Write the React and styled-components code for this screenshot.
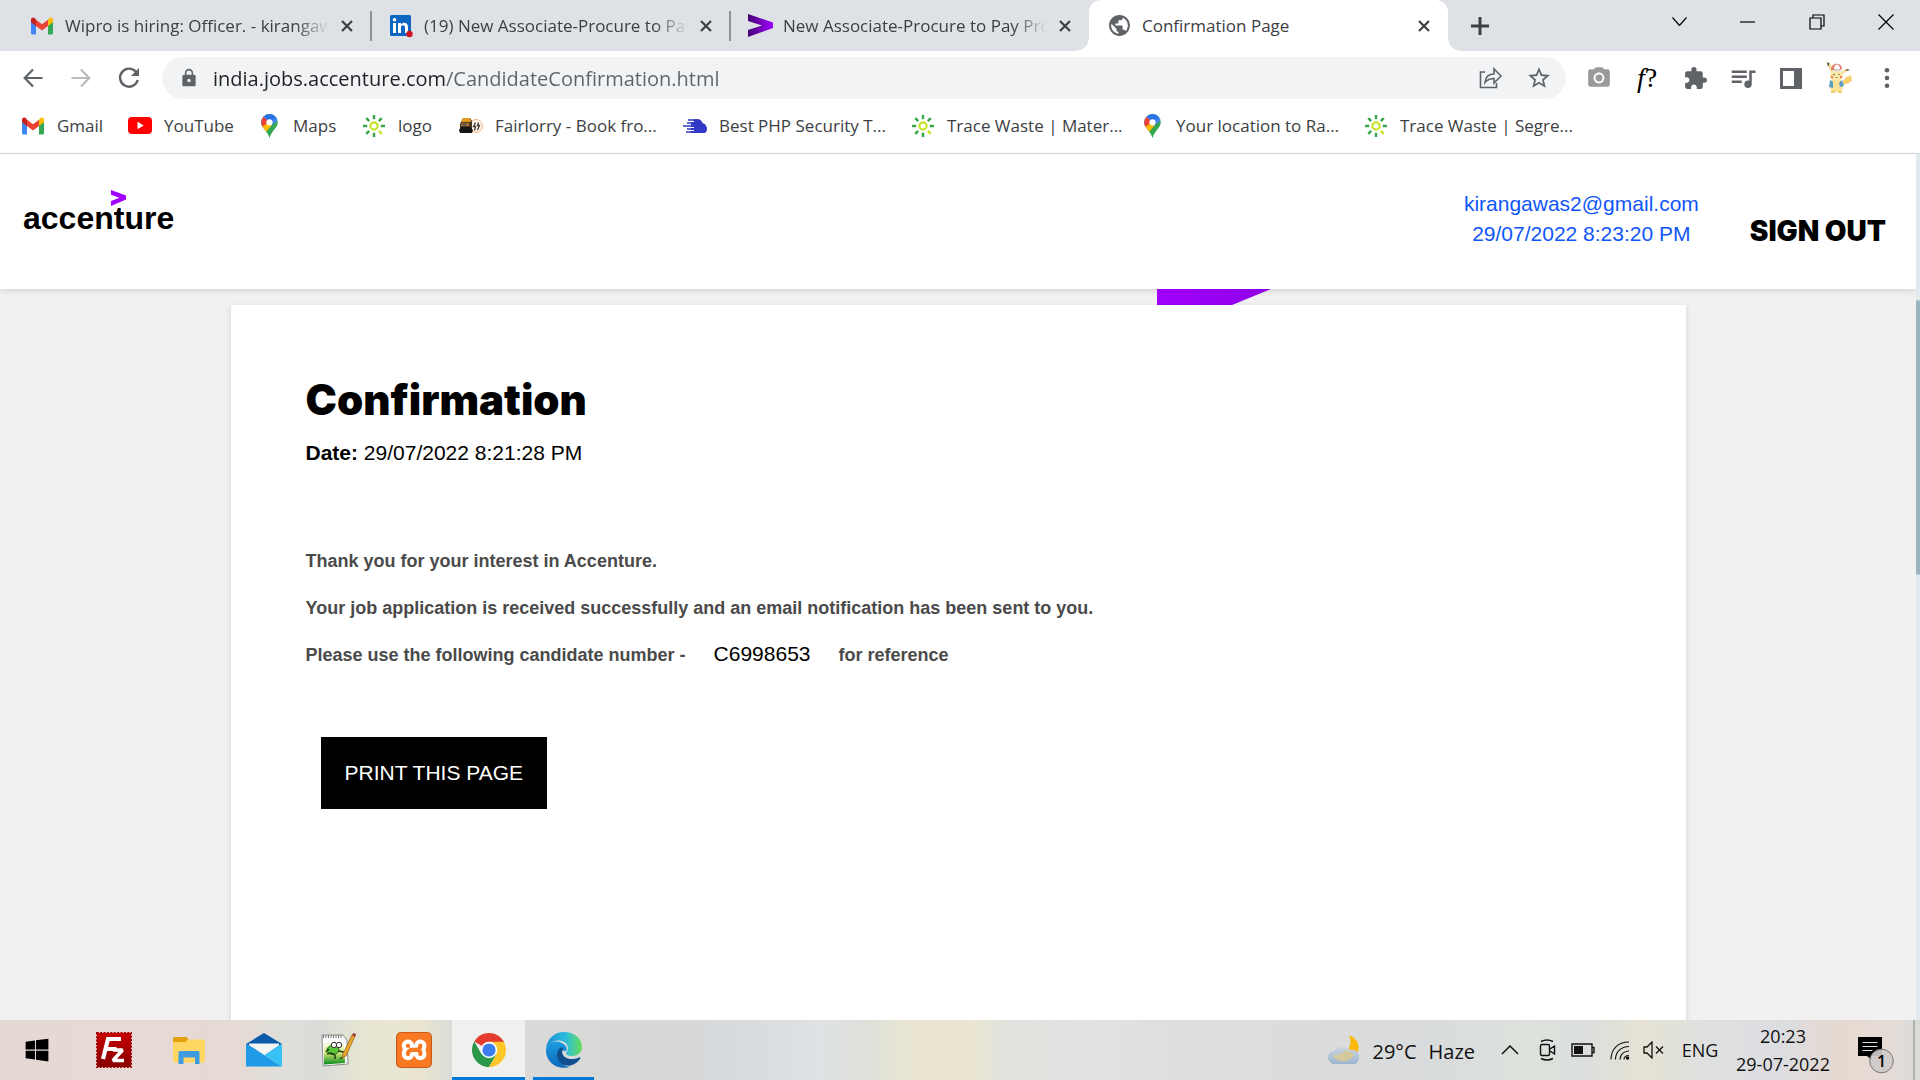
import React from "react";
import styled, { createGlobalStyle } from "styled-components";
import { MdLock, MdStarBorder, MdExtension, MdQueueMusic, MdPublic, MdCameraAlt } from "react-icons/md";
import { FaWindows } from "react-icons/fa";
import { SiXampp } from "react-icons/si";

const UI = `"Open Sans", "Noto Sans", sans-serif`;
const ARIAL = `"Liberation Sans", Arial, sans-serif`;
const GRAPHIK = `Inter, "Liberation Sans", sans-serif`;

const GlobalStyle = createGlobalStyle`
  * { box-sizing: border-box; }
  body { margin: 0; background: #fff; overflow: hidden; }
  button { border: 0; padding: 0; background: none; color: inherit; font: inherit; cursor: pointer; }
  a { color: inherit; text-decoration: none; }
  p, h1 { margin: 0; }
  svg { display: block; flex: none; }
`;

const Screen = styled.div`
  display: flex;
  flex-direction: column;
  height: 100vh;
  font-family: ${UI};
`;

/* ---------- browser chrome ---------- */

const TabStrip = styled.div`
  display: flex;
  height: 51px;
  padding-left: 12px;
  background: #dee1e6;
  color: #3c4043;
`;

const Tab = styled.div`
  position: relative;
  display: flex;
  align-items: center;
  gap: 12px;
  width: 359px;
  padding: 0 18px;
  background: ${(p) => (p.$active ? "#fff" : "transparent")};
  border-radius: ${(p) => (p.$active ? "12px 12px 0 0" : "0")};

  &::before,
  &::after {
    content: "";
    display: ${(p) => (p.$active ? "block" : "none")};
    position: absolute;
    bottom: 0;
    width: 12px;
    height: 12px;
  }
  &::before { right: 100%; background: radial-gradient(circle at 0 0, transparent 11px, #fff 12px); }
  &::after { left: 100%; background: radial-gradient(circle at 100% 0, transparent 11px, #fff 12px); }
`;

const TabDivider = styled.span`
  position: absolute;
  right: -1px;
  top: 11px;
  width: 2px;
  height: 30px;
  background: #8f9399;
`;

const TabLink = styled.button`
  display: flex;
  flex: 1;
  align-items: center;
  gap: 11px;
  min-width: 0;
  height: 51px;
  text-align: left;
`;

const TabTitle = styled.span`
  flex: 1;
  overflow: hidden;
  white-space: nowrap;
  font-size: 17px;
  line-height: 24px;
  ${(p) => p.$fade && "mask-image: linear-gradient(90deg, #000 calc(100% - 34px), transparent);"}
`;

const IconBox = styled.span`
  display: flex;
  flex: none;
  align-items: center;
  justify-content: center;
  width: 24px;
  height: 28px;
`;

const IconButton = styled.button`
  display: flex;
  flex: none;
  align-items: center;
  justify-content: center;
  width: ${(p) => p.$w || 48}px;
  height: ${(p) => p.$h || 42}px;
  color: ${(p) => p.$c || "#5f6368"};
`;

const WindowButtons = styled.div`
  display: flex;
  margin-left: auto;
`;

const Toolbar = styled.div`
  display: flex;
  align-items: center;
  height: 54px;
  padding: 0 9px;
`;

const Omnibox = styled.label`
  display: flex;
  flex: 1;
  align-items: center;
  height: 42px;
  margin: 0 9px;
  padding: 0 3px 0 15px;
  border-radius: 21px;
  background: #f1f3f4;
  color: #5f6368;
`;

const UrlInput = styled.input`
  flex: 1;
  min-width: 0;
  margin-left: 12px;
  padding: 2px 0 0;
  border: 0;
  outline: 0;
  background: linear-gradient(90deg, #202124 232px, #5f6368 232px);
  background-clip: text;
  -webkit-text-fill-color: transparent;
  font-family: ${UI};
  font-size: 20px;
  line-height: 28px;
`;

const Extension = styled.span`
  font-family: "Liberation Serif", serif;
  font-size: 28px;
  line-height: 30px;
  color: #000;
`;

const Bookmarks = styled.nav`
  display: flex;
  height: 49px;
  padding: 0 21px;
  border-bottom: 1px solid #d5d7da;
`;

const Bookmark = styled.a`
  display: flex;
  align-items: center;
  gap: 12px;
  width: ${(p) => p.$w}px;
  height: 41px;
  white-space: nowrap;
  font-size: 17px;
  color: #3c4043;
`;

/* ---------- page ---------- */

const Viewport = styled.div`
  display: flex;
  flex: 1;
  min-height: 0;
`;

const Page = styled.main`
  display: flex;
  flex: 1;
  flex-direction: column;
  min-width: 0;
  background: #f1f1f1;
  font-family: ${ARIAL};
`;

const ScrollTrack = styled.div`
  width: 4px;
  padding-top: 146px;
  background: #e1eaed;
`;

const ScrollThumb = styled.div`
  height: 275px;
  border-radius: 2px;
  background: #9bb4c2;
`;

const Header = styled.header`
  display: flex;
  justify-content: space-between;
  height: 135px;
  padding: 0 30px 0 23px;
  background: #fff;
  box-shadow: 0 2px 6px rgba(0, 0, 0, 0.12);
`;

const Logo = styled.a`
  display: flex;
  flex-direction: column;
  padding-top: 36px;
  font-size: 32px;
  font-weight: 700;
  line-height: 24px;
  color: #000;

  svg { margin-left: 88px; }
`;

const Account = styled.div`
  display: flex;
  gap: 51px;
`;

const AccountInfo = styled.div`
  padding-top: 35px;
  text-align: center;
  font-size: 21px;
  line-height: 30px;
  color: #0f56fa;
`;

const SignOut = styled.a`
  padding-top: 61px;
  font-family: ${GRAPHIK};
  font-size: 28px;
  font-weight: 900;
  line-height: 32px;
  color: #000;
`;

const Banner = styled.div`
  height: 16px;
  padding-left: calc(50% + 199px);
`;

const Card = styled.section`
  flex: 1;
  width: 76%;
  max-width: 1455px;
  margin: 0 auto;
  padding: 0 75px;
  background: #fff;
  box-shadow: 0 2px 6px rgba(0, 0, 0, 0.14);
`;

const Title = styled.h1`
  padding-top: 70px;
  font-family: ${GRAPHIK};
  font-size: 42px;
  font-weight: 900;
  line-height: 50px;
  color: #000;
`;

const DateLine = styled.p`
  margin-top: 13px;
  font-size: 21px;
  line-height: 30px;
  color: #000;
`;

const Messages = styled.div`
  margin-top: 70px;
`;

const Message = styled.p`
  height: 47px;
  font-size: 18px;
  font-weight: 700;
  line-height: 47px;
  color: #4a4a4a;
`;

const CandidateNumber = styled.span`
  margin: 0 28px;
  font-size: 21px;
  font-weight: 400;
  line-height: 24px;
  color: #000;
`;

const PrintButton = styled.button`
  display: block;
  height: 72px;
  margin: 58px 0 0 15px;
  padding: 0 24px;
  background: #000;
  font-family: ${ARIAL};
  font-size: 21px;
  color: #fff;
`;

/* ---------- taskbar ---------- */

const Taskbar = styled.footer`
  display: flex;
  height: 60px;
  color: #111;
  background: linear-gradient(
    90deg, #e5d9d5 0, #e7d9d6 180px, #e5dad4 240px, #dfdfda 280px, #dadcd8 320px, #e8e6d2 370px,
    #e9e5cf 420px, #dbdbd8 450px, #dadad8 520px, #d8d8d6 610px, #d6d8da 700px, #dee2e4 820px,
    #dfe0da 870px, #e8e5d2 905px, #ebe3cf 945px, #e9e6d2 975px, #e0e2de 1010px, #e1e3e1 1090px,
    #dddedf 1180px, #dcdcda 1310px, #d9dbdd 1420px, #dde2dc 1530px, #dcdfdd 1590px, #e5e2d3 1640px,
    #dee0e0 1710px, #dcdde1 1780px, #e6d9d1 1840px, #e6dcd6 1890px, #dbdcda 1915px);
`;

const Apps = styled.div`
  display: flex;
  gap: 2px;
`;

const AppButton = styled.button`
  position: relative;
  display: flex;
  align-items: center;
  justify-content: center;
  width: 73px;
  height: 60px;
  background: ${(p) => (p.$active ? "#f0f0ef" : "none")};

  &:first-child { width: 75px; padding-right: 2px; }

  &::after {
    content: "";
    display: ${(p) => (p.$line ? "block" : "none")};
    position: absolute;
    bottom: 0;
    width: ${(p) => p.$line}px;
    height: 3px;
    background: #0078d7;
  }
`;

const Tray = styled.div`
  display: flex;
  align-items: center;
  margin-left: auto;
`;

const Weather = styled.button`
  display: flex;
  align-items: center;
  gap: 12px;
  margin-right: 20px;
  font-size: 20px;
  line-height: 28px;

  span { padding-top: 3px; }
`;

const Language = styled.button`
  width: 58px;
  margin-left: 6px;
  font-size: 18px;
`;

const Clock = styled.button`
  width: 108px;
  text-align: center;
  font-size: 18px;
  line-height: 28px;
`;

const Notifications = styled.button`
  width: 76px;
  padding: 10px 0 0 21px;
`;

const ShowDesktop = styled.button`
  width: 7px;
  height: 60px;
  border-left: 2px solid #b0b0ac;
`;

const XamppTile = styled.span`
  display: block;
  padding: 1px;
  border-radius: 5px;
  background: linear-gradient(#fff, #fff) center / 28px 28px no-repeat, #c65b1a;
`;

/* ---------- icons ---------- */

const GmailIcon = () => (
  <svg width="22" height="18" viewBox="0 0 22 17">
    <path d="M0 3v12.500q0 1.500 1.500 1.500H5V7z" fill="#4285f4" />
    <path d="M22 3v12.500q0 1.500-1.500 1.500H17V7z" fill="#34a853" />
    <path d="M17 2.200V8.500L22 4.700V2.300C22 .2 19.800-.7 18.200.6z" fill="#fbbc04" />
    <path d="M5 8.500V2.200L11 6.700l6-4.500v6.300L11 13z" fill="#ea4335" />
    <path d="M0 2.300v2.400l5 3.800V2.200L3.800.6C2.200-.7 0 .2 0 2.300z" fill="#c5221f" />
  </svg>
);

const LinkedInIcon = () => (
  <svg width="24" height="24" viewBox="0 0 24 24">
    <rect x="1" y="1" width="21" height="21" rx="1.500" fill="#0a66c2" />
    <path d="M4 9h3v10H4zM9 9h3v1.400c1.800-2.700 7-2.200 7 2.600v6h-3v-5.400c0-3.200-4-2.800-4 0V19H9z" fill="#fff" />
    <circle cx="5.500" cy="5.800" r="1.800" fill="#fff" />
    <circle cx="20.500" cy="20" r="3.200" fill="#d11124" />
  </svg>
);

const ChevronLogo = () => (
  <svg width="25" height="25" viewBox="0 0 25 25">
    <defs>
      <linearGradient id="chev"><stop offset="0" stopColor="#460073" /><stop offset="1" stopColor="#a100ff" /></linearGradient>
    </defs>
    <path d="M0 1l25 8.500v5.500L0 24v-7l14-4.500L0 8z" fill="url(#chev)" />
  </svg>
);

const YouTubeIcon = () => (
  <svg width="24" height="17" viewBox="0 0 24 17">
    <rect width="24" height="17" rx="4" fill="#f00" />
    <path d="M9.500 4.800v7.400l6.200-3.700z" fill="#fff" />
  </svg>
);

const MapsIcon = () => (
  <svg width="17" height="24" viewBox="0 0 17 24">
    <defs>
      <clipPath id="pin"><path d="M8.500 0A8.300 8.300 0 0 0 .2 8.300C.2 14 6 16 8.500 24 11 16 16.800 14 16.800 8.300A8.300 8.300 0 0 0 8.500 0z" /></clipPath>
    </defs>
    <g clipPath="url(#pin)">
      <rect width="17" height="24" fill="#34a853" />
      <path d="M0 14L8.500 5 17 0H0z" fill="#4285f4" />
      <path d="M8.500 8L17 0v6L9 13z" fill="#4285f4" />
      <path d="M0 2.500l2.500.5 6 5-6 7H0z" fill="#ea4335" />
      <path d="M0 13.500L8.500 8l2.500 3-6.500 7.500z" fill="#fbbc04" />
      <path d="M3 2l6-2 7 3-7 5z" fill="#2b74e8" />
    </g>
    <circle cx="8.500" cy="8.300" r="3.100" fill="#fff" />
  </svg>
);

const SunIcon = () => (
  <svg width="22" height="22" viewBox="-11 -11 22 22">
    <circle r="3.600" fill="none" stroke="#c6e528" strokeWidth="2.200" />
    {[0, 45, 90, 135, 180, 225, 270, 315].map((a) => (
      <rect key={a} x="-1.200" y="-11" width="2.400" height="4.200" fill={a === 135 ? "#c6e528" : "#35a648"} transform={`rotate(${a})`} />
    ))}
  </svg>
);

const TruckIcon = () => (
  <svg width="24" height="18" viewBox="0 0 24 18">
    <circle cx="17" cy="9" r="6.500" fill="#fff4ea" stroke="#f3b78a" />
    <path d="M4 1h7l2 3v9H1V7z" fill="#4a3826" />
    <path d="M4 1h7l1 4H2z" fill="#e49a1d" />
    <path d="M3 6h7v3H2z" fill="#b97a26" />
    <path d="M4 6.500h4v2H3z" fill="#555" />
    <path d="M0 13l2-3h9l3 3-1 3H1z" fill="#151515" />
    <path d="M16.500 5.500l-2 4h2l-1 4M19.500 5.500l-1 3h2l-2 4.500" stroke="#383838" fill="none" strokeWidth="1.300" />
  </svg>
);

const CloudIcon = () => (
  <svg width="24" height="16" viewBox="0 0 24 16">
    <path d="M8 8c0-4 2-7 6-7 3 0 5 2 5.500 4C23 6 24 9 24 11c0 2-1 4-3 4H8z" fill="#3239c4" />
    <path d="M5 2h8M4 5h7M0 8h10M4 11h7M3 14h8" stroke="#3239c4" strokeWidth="1.300" />
    <path d="M7 3.500h4M5 9.500h6M6 12.500h5" stroke="#fff" strokeWidth="1" />
  </svg>
);

const Stroke = ({ w, h, d, sw = 2, c = "currentColor", children }) => (
  <svg width={w} height={h} viewBox={`0 0 ${w} ${h}`} fill="none" stroke={c} strokeWidth={sw}>
    <path d={d} />
    {children}
  </svg>
);

const PikachuIcon = () => (
  <svg width="26" height="32" viewBox="0 0 26 32">
    <path d="M17 19l3-4 5-1.500 1 5-4 3-5 1z" fill="#f6cf6d" />
    <path d="M1 0l3 1.500 4 7-3 3zM24 8l-4-1-5 3 1 2z" fill="#f5df97" />
    <path d="M1 0l2.500 1.500L2 5zM24 8l-3-1-2 2z" fill="#51412f" />
    <path d="M5 18q5-4 10 0l2 8-2 4H6l-2-4z" fill="#f9e194" />
    <path d="M4 18l3 2v6l-4-1zM16 18l-3 3 1 4 4-1z" fill="#5a9bc4" />
    <ellipse cx="10.500" cy="13.500" rx="6.500" ry="5.500" fill="#fbe9a9" />
    <path d="M5 8c0-8 11-8 11-1l-3 1z" fill="#e3786c" />
    <path d="M8 7c0-6 6-6 6 0z" fill="#fff" />
    <path d="M5 8.500q6-3 12 0l-6 1z" fill="#d2d6d8" />
    <circle cx="6" cy="15" r="1.200" fill="#f07c58" />
    <circle cx="15" cy="15" r="1.200" fill="#f07c58" />
    <circle cx="8" cy="12.500" r=".8" fill="#554" />
    <path d="M12 12.500h2M9.500 15q1 2 2 0" stroke="#865" fill="none" strokeWidth=".8" />
    <path d="M5 29h4v2H5zM12 29h4v2h-4z" fill="#ecca70" />
  </svg>
);

const FileZillaIcon = () => (
  <svg width="36" height="36" viewBox="0 0 36 36">
    <defs><linearGradient id="fz" x2="0" y2="1"><stop offset="0" stopColor="#c80000" /><stop offset="1" stopColor="#870000" /></linearGradient></defs>
    <rect x="1" y="1" width="34" height="34" fill="url(#fz)" />
    <rect x=".75" y=".75" width="34.500" height="34.500" fill="none" stroke="#a00000" strokeWidth="1.500" strokeDasharray="2 1.400" />
    <path d="M7 27L12 7h13M9.500 17h11" stroke="#fff" strokeWidth="4.200" fill="none" />
    <path d="M17 18h9.500L17 28.500h11" stroke="#fff" strokeWidth="3.600" fill="none" strokeLinejoin="bevel" />
  </svg>
);

const FolderIcon = () => (
  <svg width="32" height="27" viewBox="0 0 32 27">
    <path d="M0 1.500Q0 0 1.500 0h12L16 3v3H0z" fill="#e3a00a" />
    <path d="M0 5h12l3-2.500h15.500Q32 2.500 32 4v20q0 1.500-1.500 1.500h-29Q0 25.500 0 24z" fill="#ffd661" />
    <path d="M5.500 27V15.500Q5.500 14 7 14h18q1.500 0 1.500 1.500V27H22v-6.500H10.500V27z" fill="#3f9be0" />
  </svg>
);

const MailIcon = () => (
  <svg width="36" height="34" viewBox="0 0 36 34">
    <path d="M0 11L18 0l18 11v6H0z" fill="#0a5aa8" />
    <path d="M3 10.500h30v2L19 22 3 12.500z" fill="#f4f4f4" />
    <path d="M0 10.500L36 33.500H0z" fill="#1e9ae6" />
    <path d="M36 10.500v23L18.500 22z" fill="#36c2f5" />
  </svg>
);

const NotepadIcon = () => (
  <svg width="35" height="34" viewBox="0 0 35 34">
    <defs><linearGradient id="np" x2="0" y2="1"><stop offset="0" stopColor="#fff" /><stop offset=".5" stopColor="#d4e77a" /><stop offset="1" stopColor="#078a18" /></linearGradient></defs>
    <path d="M1 2h21l4 5 1 24-25 2z" fill="#fafafa" stroke="#8d8d8d" />
    <path d="M3 8h20l1 22-21 1.500z" fill="url(#np)" />
    <path d="M2 3.500h20" stroke="#777" strokeWidth="3" strokeDasharray="1 1.500" />
    <ellipse cx="12" cy="17" rx="6" ry="4.500" fill="#59c63a" stroke="#1c6c1a" />
    <circle cx="13" cy="12" r="2.700" fill="#fff" stroke="#333" />
    <circle cx="18" cy="12" r="2.700" fill="#fff" stroke="#333" />
    <path d="M6 21l4-1 4 2M8 16l-3 3M17 18l6 1M14 26v-4M19 26l3-2" stroke="#243c14" strokeWidth="1.500" fill="none" />
    <path d="M21 25l1-4L31 2l3 1-9 20z" fill="#eda62a" stroke="#8a5b18" strokeWidth=".7" />
    <path d="M31 2l1.500-2L35 1l-1 3z" fill="#9b3638" />
  </svg>
);

const ChromeIcon = () => (
  <svg width="34" height="34" viewBox="-17 -17 34 34">
    <path d="M0 0L-14.700-8.500A17 17 0 0 1 14.700-8.500z" fill="#e33b2e" />
    <path d="M-14.700-8.500A17 17 0 0 0 0 17L7.400 4.200-7.400 4.200z" fill="#2a9848" />
    <path d="M14.700-8.500A17 17 0 0 1 0 17L7.400 4.200 0-8.500z" fill="#fcc629" />
    <path d="M0-8.500h14.700L15-8H0z" fill="#e33b2e" />
    <circle r="8.300" fill="#fff" />
    <circle r="6.600" fill="#3b7ded" />
  </svg>
);

const EdgeIcon = () => (
  <svg width="36" height="36" viewBox="0 0 36 36">
    <defs>
      <linearGradient id="e1"><stop offset="0" stopColor="#1b8fd8" /><stop offset=".55" stopColor="#2dbcdc" /><stop offset="1" stopColor="#66dd58" /></linearGradient>
      <linearGradient id="e2" x2="0" y2="1"><stop offset="0" stopColor="#1b9de2" /><stop offset="1" stopColor="#0d68b8" /></linearGradient>
    </defs>
    <path d="M0 17C1 6 9 0 18 0c11 0 18 7 18 15 0 6-5 9-10 9-4 0-6-1-6-3 0-1 2-2 2-5C21 7 6 5 0 17z" fill="url(#e1)" />
    <path d="M0 17C3 9 11 8 16 11c4 2 6 6 4 8-7-2-9 7-5 11 2 3 6 5 9 5C9 39-1 28 0 17z" fill="url(#e2)" />
    <path d="M13 17c-3 4-3 10 2 14 5 5 14 3 19-4 1-1 0-2-1-1.500-9 4-17 0-17-6 0-2 1-3 2-3.500-2-1-4 0-5 1z" fill="#10508f" />
  </svg>
);

const WeatherIcon = () => (
  <svg width="32" height="30" viewBox="0 0 32 30">
    <defs><linearGradient id="cl" x2="0" y2="1"><stop offset="0" stopColor="#cdd6df" /><stop offset="1" stopColor="#9db4d0" /></linearGradient></defs>
    <path d="M21 0c8 3 13 12 7 19-4 5-12 5-18 0 10 0 15-9 11-19z" fill="#fbb90c" />
    <path d="M7 29a6.500 6.500 0 0 1-1-13c3-5 12-6 16-1 5-1 9 2 9 7 0 4-2 7-5 7z" fill="url(#cl)" />
    <path d="M5 20c2 8 18 9 21-1-3-3-6-2-8-4-4 4-8 5-13 5z" fill="#d3ca9b" />
  </svg>
);

const NotificationIcon = () => (
  <svg width="36" height="38" viewBox="0 0 36 38">
    <path d="M0 1h24v19H14v4l-5-4H0z" fill="#000" />
    <path d="M4.500 6.500h15M4.500 10.500h15M4.500 14.500h10" stroke="#ddd" strokeWidth="1.200" />
    <circle cx="23.500" cy="25" r="11.800" fill="#cfcbc9" fillOpacity=".92" stroke="#777" />
    <text x="23.500" y="31" textAnchor="middle" fontFamily="Open Sans" fontWeight="600" fontSize="16" fill="#000">1</text>
  </svg>
);

const CloseGlyph = () => <Stroke w={12} h={12} sw={2.2} d="M1 1l10 10M11 1L1 11" c="#3c4043" />;

const tabs = [
  { title: "Wipro is hiring: Officer. - kirangawas2@gmail.com", icon: <GmailIcon />, divider: true },
  { title: "(19) New Associate-Procure to Pay Processing", icon: <LinkedInIcon />, divider: true },
  { title: "New Associate-Procure to Pay Processing", icon: <ChevronLogo /> },
  { title: "Confirmation Page", icon: <MdPublic size={25} color="#5f6368" />, active: true },
];

const bookmarks = [
  { label: "Gmail", icon: <GmailIcon />, width: 107 },
  { label: "YouTube", icon: <YouTubeIcon />, width: 129 },
  { label: "Maps", icon: <MapsIcon />, width: 105 },
  { label: "logo", icon: <SunIcon />, width: 97 },
  { label: "Fairlorry - Book fro...", icon: <TruckIcon />, width: 224 },
  { label: "Best PHP Security T...", icon: <CloudIcon />, width: 228 },
  { label: "Trace Waste | Mater...", icon: <SunIcon />, width: 229 },
  { label: "Your location to Ra...", icon: <MapsIcon />, width: 224 },
  { label: "Trace Waste | Segre...", icon: <SunIcon />, width: 224 },
];

const apps = [
  { label: "Start", icon: <FaWindows size={26} color="#000" /> },
  { label: "FileZilla", icon: <FileZillaIcon /> },
  { label: "File Explorer", icon: <FolderIcon /> },
  { label: "Mail", icon: <MailIcon /> },
  { label: "Notepad++", icon: <NotepadIcon /> },
  { label: "XAMPP", icon: <XamppTile><SiXampp size={34} color="#f97923" /></XamppTile> },
  { label: "Chrome", icon: <ChromeIcon />, active: true, line: 73 },
  { label: "Edge", icon: <EdgeIcon />, line: 61 },
];

export default function App() {
  return (
    <Screen>
      <GlobalStyle />
      <TabStrip>
        {tabs.map((t) => (
          <Tab key={t.title} $active={t.active}>
            <TabLink>
              <IconBox>{t.icon}</IconBox>
              <TabTitle $fade={!t.active}>{t.title}</TabTitle>
            </TabLink>
            <IconButton $w={12} $h={51} aria-label="Close tab"><CloseGlyph /></IconButton>
            {t.divider && <TabDivider />}
          </Tab>
        ))}
        <IconButton $w={64} $h={51} aria-label="New tab">
          <Stroke w={18} h={18} sw={3} d="M9 0v18M0 9h18" c="#3c4043" />
        </IconButton>
        <WindowButtons>
          <IconButton $w={68} $h={43} $c="#000" aria-label="Search tabs"><Stroke w={15} h={9} sw={1.2} d="M.5.5l7 8 7-8" /></IconButton>
          <IconButton $w={69} $h={43} $c="#000" aria-label="Minimize"><Stroke w={15} h={2} sw={1.2} d="M0 1h15" /></IconButton>
          <IconButton $w={69} $h={43} $c="#000" aria-label="Restore"><Stroke w={16} h={16} sw={1.2} d="M1 4h11v11H1zM4 4V1h11v11h-3" /></IconButton>
          <IconButton $w={69} $h={43} $c="#000" aria-label="Close"><Stroke w={16} h={16} sw={1.2} d="M.5.5l15 15M15.500.5l-15 15" /></IconButton>
        </WindowButtons>
      </TabStrip>

      <Toolbar>
        <IconButton aria-label="Back"><Stroke w={20} h={20} sw={2.2} d="M19.500 10H2M10 1.500L1.700 10l8.300 8.500" /></IconButton>
        <IconButton $c="#babcbe" aria-label="Forward"><Stroke w={20} h={20} sw={2.2} d="M.5 10H18M10 1.500l8.300 8.500-8.300 8.500" /></IconButton>
        <IconButton aria-label="Reload">
          <Stroke w={22} h={22} sw={2.4} d="M18.500 5.500A9 9 0 1 0 19.800 13"><path d="M21 1v8h-8z" fill="currentColor" stroke="none" /></Stroke>
        </IconButton>
        <Omnibox>
          <IconBox><MdLock size={20} /></IconBox>
          <UrlInput aria-label="Address" defaultValue="india.jobs.accenture.com/CandidateConfirmation.html" />
          <IconButton aria-label="Share">
            <Stroke w={24} h={22} sw={1.6} d="M6 5H1.500v15.500h16V16M6 15.500C6.500 10 10 7 15 7V2l7 7-7 7v-4.500c-4 0-6.500 1-9 4z" />
          </IconButton>
          <IconButton aria-label="Bookmark"><MdStarBorder size={26} /></IconButton>
        </Omnibox>
        <IconButton $c="#9a9a9a" aria-label="Screenshot">
          <MdCameraAlt size={26} />
        </IconButton>
        <IconButton aria-label="WhatFont"><Extension><i>f</i>?</Extension></IconButton>
        <IconButton aria-label="Extensions"><MdExtension size={25} /></IconButton>
        <IconButton aria-label="Media controls"><MdQueueMusic size={30} /></IconButton>
        <IconButton aria-label="Side panel">
          <svg width="22" height="21" viewBox="0 0 22 21"><path d="M0 0h22v21H0zM3 3v15h11V3z" fill="currentColor" fillRule="evenodd" /></svg>
        </IconButton>
        <IconButton aria-label="Profile"><PikachuIcon /></IconButton>
        <IconButton aria-label="Menu">
          <svg width="6" height="20" viewBox="0 0 6 20" fill="currentColor"><circle cx="3" cy="2.300" r="2.300" /><circle cx="3" cy="10" r="2.300" /><circle cx="3" cy="17.700" r="2.300" /></svg>
        </IconButton>
      </Toolbar>

      <Bookmarks>
        {bookmarks.map((b) => (
          <Bookmark key={b.label} href="#" $w={b.width}>
            <IconBox>{b.icon}</IconBox>
            {b.label}
          </Bookmark>
        ))}
      </Bookmarks>

      <Viewport>
        <Page>
          <Header>
            <Logo href="#">
              <svg width="15" height="16" viewBox="0 0 15 16"><path d="M0 0l15 5.500v4L0 16v-5l8.500-3.300L0 4.800z" fill="#a100ff" /></svg>
              accenture
            </Logo>
            <Account>
              <AccountInfo>
                <p>kirangawas2@gmail.com</p>
                <p>29/07/2022 8:23:20 PM</p>
              </AccountInfo>
              <SignOut href="#">SIGN OUT</SignOut>
            </Account>
          </Header>
          <Banner>
            <svg width="114" height="16" viewBox="0 0 114 16">
              <defs><linearGradient id="bn"><stop offset="0" stopColor="#a100ff" /><stop offset="1" stopColor="#8f00e6" /></linearGradient></defs>
              <path d="M0 0h114L75 16H0z" fill="url(#bn)" />
            </svg>
          </Banner>
          <Card>
            <Title>Confirmation</Title>
            <DateLine><b>Date:</b> 29/07/2022 8:21:28 PM</DateLine>
            <Messages>
              <Message>Thank you for your interest in Accenture.</Message>
              <Message>Your job application is received successfully and an email notification has been sent to you.</Message>
              <Message>Please use the following candidate number -<CandidateNumber>C6998653</CandidateNumber>for reference</Message>
            </Messages>
            <PrintButton>PRINT THIS PAGE</PrintButton>
          </Card>
        </Page>
        <ScrollTrack><ScrollThumb /></ScrollTrack>
      </Viewport>

      <Taskbar>
        <Apps>
          {apps.map((a) => (
            <AppButton key={a.label} aria-label={a.label} $active={a.active} $line={a.line}>{a.icon}</AppButton>
          ))}
        </Apps>
        <Tray>
          <Weather><WeatherIcon /><span>29°C</span><span>Haze</span></Weather>
          <IconButton $w={30} $h={60} $c="#111" aria-label="Show hidden icons"><Stroke w={18} h={10} sw={1.5} d="M1 9l8-8 8 8" /></IconButton>
          <IconButton $w={44} $h={60} $c="#111" aria-label="Meet now">
            <Stroke w={17} h={22} sw={1.4} d="M3 5.500h6q1.500 0 1.500 1.500v8q0 1.500-1.500 1.500H3q-1.500 0-1.500-1.500V7q0-1.500 1.500-1.500zM11 10l4.500-3v8L11 12M2 2.500q6-3 12 0M2 19.500q6 3 12 0" />
          </IconButton>
          <IconButton $w={28} $h={60} $c="#111" aria-label="Battery">
            <Stroke w={24} h={14} sw={1.4} d="M1 1h20v12H1zM21 4.500h2v5h-2"><rect x="3" y="3" width="9" height="8" fill="currentColor" stroke="none" /></Stroke>
          </IconButton>
          <IconButton $w={46} $h={60} $c="#111" aria-label="Network">
            <Stroke w={20} h={19} sw={1.1} d="M1 18.500C1 8 8 1 19 1M5.500 18.500C5.500 11 11 5.500 19 5.500M10 18.500c0-5 4-8.500 9-8.500M14 18.500c0-2.500 2-4 5-4"><circle cx="17.500" cy="17" r="1.800" fill="currentColor" stroke="none" /></Stroke>
          </IconButton>
          <IconButton $w={22} $h={60} $c="#111" aria-label="Volume muted">
            <Stroke w={22} h={18} sw={1.3} d="M1 6h3l5-5v16l-5-5H1zM13 5.500l7 7M20 5.500l-7 7" />
          </IconButton>
          <Language>ENG</Language>
          <Clock>20:23<br />29-07-2022</Clock>
          <Notifications aria-label="Notifications"><NotificationIcon /></Notifications>
          <ShowDesktop aria-label="Show desktop" />
        </Tray>
      </Taskbar>
    </Screen>
  );
}
